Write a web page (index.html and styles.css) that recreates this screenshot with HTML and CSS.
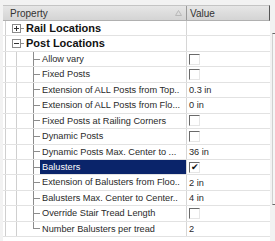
FILE: index.html
```html
<!DOCTYPE html>
<html lang="en">
<head>
    <meta charset="UTF-8">
    <title>Property Grid</title>
    <link rel="stylesheet" href="styles.css">
</head>
<body>
    <div class="frame">
        <div class="grid">
            <div class="head">
                <div class="head-cell prop">
                    <span>Property</span>
                    <svg class="sort" viewBox="0 0 7 6"><path d="M3.5 0.5 L6.5 5.5 L0.5 5.5 Z"/></svg>
                </div>
                <div class="head-cell">Value</div>
            </div>

            <div class="row cat first">
                <div class="label"><span class="expander"><span class="box plus"></span></span><span class="text">Rail Locations</span></div>
                <div class="value"></div>
            </div>
            <div class="row cat">
                <div class="label"><span class="expander last-cat"><span class="box"></span></span><span class="text">Post Locations</span></div>
                <div class="value"></div>
            </div>

            <div class="row">
                <div class="label"><span class="indent"></span><span class="text">Allow vary</span></div>
                <div class="value"><span class="check"></span></div>
            </div>
            <div class="row">
                <div class="label"><span class="indent"></span><span class="text">Fixed Posts</span></div>
                <div class="value"><span class="check"></span></div>
            </div>
            <div class="row">
                <div class="label"><span class="indent"></span><span class="text">Extension of ALL Posts from Top..</span></div>
                <div class="value">0.3 in</div>
            </div>
            <div class="row">
                <div class="label"><span class="indent"></span><span class="text">Extension of ALL Posts from Flo...</span></div>
                <div class="value">0 in</div>
            </div>
            <div class="row">
                <div class="label"><span class="indent"></span><span class="text">Fixed Posts at Railing Corners</span></div>
                <div class="value"><span class="check"></span></div>
            </div>
            <div class="row">
                <div class="label"><span class="indent"></span><span class="text">Dynamic Posts</span></div>
                <div class="value"><span class="check"></span></div>
            </div>
            <div class="row">
                <div class="label"><span class="indent"></span><span class="text">Dynamic Posts Max. Center to ...</span></div>
                <div class="value">36 in</div>
            </div>
            <div class="row">
                <div class="label"><span class="indent"></span><span class="text selected">Balusters</span></div>
                <div class="value"><span class="check on">&#10004;</span></div>
            </div>
            <div class="row">
                <div class="label"><span class="indent"></span><span class="text">Extension of Balusters from Floo..</span></div>
                <div class="value">2 in</div>
            </div>
            <div class="row">
                <div class="label"><span class="indent"></span><span class="text">Balusters Max. Center to Center..</span></div>
                <div class="value">4 in</div>
            </div>
            <div class="row">
                <div class="label"><span class="indent"></span><span class="text">Override Stair Tread Length</span></div>
                <div class="value"><span class="check"></span></div>
            </div>
            <div class="row">
                <div class="label"><span class="indent end"></span><span class="text">Number Balusters per tread</span></div>
                <div class="value">2</div>
            </div>
        </div>
        <div class="scroll">
            <div class="thumb"></div>
        </div>
    </div>
</body>
</html>
```

FILE: styles.css
```css
body {
    margin: 0;
    background: #f2f2f2;
    font-family: "Liberation Sans", Arial, sans-serif;
    font-size: 9.2px;
    color: #222;
}

.frame {
    display: flex;
    padding: 5px 0 0 3px;
    height: 236px;
}

.grid {
    width: 267px;
    background: #fff;
}

.head {
    display: grid;
    grid-template-columns: 184px 83px;
    height: 16px;
    box-sizing: border-box;
    background: linear-gradient(#e6e6e6, #d4d4d4);
    border-top: 1px solid #c4c4c4;
    border-bottom: 1px solid #b0b0b0;
    border-right: 1px solid #555;
    font-size: 10px;
}

.head-cell {
    display: flex;
    align-items: center;
    padding-left: 3px;
    color: #333;
}

.head-cell.prop {
    justify-content: space-between;
    padding-left: 7px;
    padding-right: 4px;
    border-right: 1px solid #9a9a9a;
}

.sort {
    width: 7px;
    height: 6px;
    fill: none;
    stroke: #b8b8b8;
    stroke-width: 1;
}

.row {
    display: grid;
    grid-template-columns: 184px 83px;
    height: 15.44px;
    box-sizing: border-box;
    border-bottom: 1px solid #e2e2e2;
}

.label {
    display: flex;
    border-right: 1px solid #d6d6d6;
    overflow: hidden;
    white-space: nowrap;
}

.text {
    display: block;
    flex: 1;
    min-width: 0;
    padding-left: 2px;
    line-height: 14.4px;
    overflow: hidden;
    color: #2a2a2a;
}

.text.selected {
    background: #0a246a;
    color: #fff;
}

.cat .text {
    font-weight: bold;
    font-size: 11px;
    color: #111;
    padding-left: 0;
}

/* tree guide lines */
.indent {
    width: 37px;
    flex: none;
    background:
        linear-gradient(#cfcfcf, #cfcfcf) 2px 0 / 1px 100% no-repeat,
        linear-gradient(#cfcfcf, #cfcfcf) 13px 0 / 1px 100% no-repeat,
        linear-gradient(#8c8c8c, #8c8c8c) 30px 0 / 1px 100% no-repeat,
        linear-gradient(#8c8c8c, #8c8c8c) 30px 50% / 7px 1px no-repeat;
}

.indent.end {
    background:
        linear-gradient(#cfcfcf, #cfcfcf) 2px 0 / 1px 100% no-repeat,
        linear-gradient(#cfcfcf, #cfcfcf) 13px 0 / 1px 100% no-repeat,
        linear-gradient(#8c8c8c, #8c8c8c) 30px 0 / 1px 50% no-repeat,
        linear-gradient(#8c8c8c, #8c8c8c) 30px 50% / 7px 1px no-repeat;
}

.expander {
    width: 23px;
    flex: none;
    display: flex;
    align-items: center;
    padding-left: 9px;
    box-sizing: border-box;
    background:
        linear-gradient(#cfcfcf, #cfcfcf) 2px 0 / 1px 100% no-repeat,
        linear-gradient(#8c8c8c, #8c8c8c) 17px 50% / 4px 1px no-repeat;
}

.box {
    width: 9px;
    height: 9px;
    box-sizing: border-box;
    border: 1px solid #8a8a8a;
    background:
        linear-gradient(#333, #333) 50% 50% / 5px 1px no-repeat,
        #fff;
}

.box.plus {
    background:
        linear-gradient(#333, #333) 50% 50% / 5px 1px no-repeat,
        linear-gradient(#333, #333) 50% 50% / 1px 5px no-repeat,
        #fff;
}

.value {
    display: flex;
    align-items: center;
    padding-left: 2px;
    color: #2a2a2a;
}

.check {
    width: 11px;
    height: 11px;
    box-sizing: border-box;
    border-top: 1px solid #6a6a6a;
    border-left: 1px solid #6a6a6a;
    border-right: 1px solid #e6e6e6;
    border-bottom: 1px solid #e6e6e6;
    background: #fff;
    font-size: 9px;
    line-height: 9px;
    text-align: center;
    color: #111;
}

.scroll {
    width: 5px;
    padding-top: 28px;
    padding-bottom: 36px;
    display: flex;
}

.thumb {
    flex: 1;
    margin-left: 2px;
    border-left: 1px solid #d0d0d0;
    border-top: 1px solid #666;
    border-bottom: 1px solid #666;
    background: #f6f6f6;
}
```
